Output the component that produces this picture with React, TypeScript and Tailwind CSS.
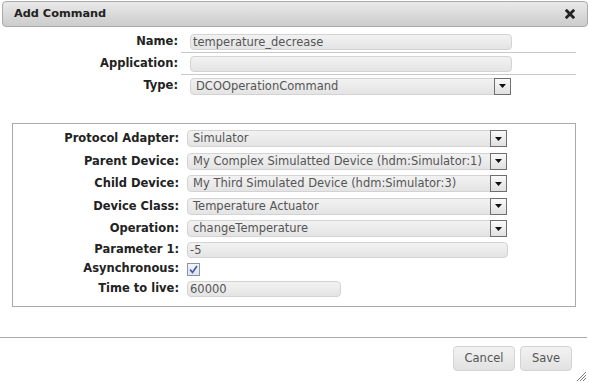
import React from 'react';

const font = { fontFamily: '"DejaVu Sans", Verdana, sans-serif' };

const TextBox = ({ value, w }: { value: string; w: string }) => (
  <div
    className={`${w} h-[16px] rounded-[4px] border border-[#d3d3d3] bg-gradient-to-b from-[#f2f2f2] to-[#e4e4e4] pl-[2px] text-[11.5px] leading-[14px] text-[#555] whitespace-nowrap overflow-hidden`}
  >
    {value}
  </div>
);

const Select = ({ value, w }: { value: string; w: string }) => (
  <div
    className={`${w} h-[17px] flex items-center rounded-[4px] border border-[#d3d3d3] bg-gradient-to-b from-[#f2f2f2] to-[#e4e4e4] text-[11.5px] text-[#555]`}
  >
    <span className="flex-1 pl-[5px] leading-[15px] whitespace-nowrap overflow-hidden">{value}</span>
    <div className="w-[17px] h-[17px] mr-[-1px] border border-[#6f6f6f] bg-gradient-to-b from-[#fafafa] to-[#e0e0e0] flex items-center justify-center">
      <svg width="7" height="4" viewBox="0 0 7 4">
        <path d="M0 0 H7 L3.5 4 Z" fill="#111" />
      </svg>
    </div>
  </div>
);

const Label = ({ children }: { children: React.ReactNode }) => (
  <div className="w-[178px] text-right font-bold text-[11.5px] text-[#222] whitespace-nowrap">{children}</div>
);

const TopRow = ({ label, children, line }: { label: string; children: React.ReactNode; line?: boolean }) => (
  <div className="flex h-[22px] items-center">
    <div className="w-[181px] pr-[3px] flex justify-end">
      <Label>{label}</Label>
    </div>
    <div className={`w-[395px] h-full flex items-center pl-[9px] ${line ? 'border-b border-[#c8c8c8]' : ''}`}>
      {children}
    </div>
  </div>
);

const BoxRow = ({ label, h, children }: { label: string; h: string; children: React.ReactNode }) => (
  <div className={`flex ${h} items-center`}>
    <div className="w-[166px] flex justify-end">
      <Label>{label}</Label>
    </div>
    <div className="pl-[8px] flex items-center">{children}</div>
  </div>
);

export default function App() {
  return (
    <div className="w-[589px] h-[383px] bg-white relative overflow-hidden" style={font}>
      {/* Заголовок */}
      <div className="mx-[2px] mt-[1px] h-[26px] w-[586px] rounded-[4px] border border-[#aaaaaa] bg-gradient-to-b from-[#e9e9e9] to-[#cccccc] flex items-center justify-between px-[11px]">
        <span className="font-bold text-[11.3px] text-[#222]">Add Command</span>
        <svg width="10" height="10" viewBox="0 0 10 10" className="mr-[1px]">
          <path d="M1.8 1.8 L8.2 8.2 M8.2 1.8 L1.8 8.2" stroke="#222" strokeWidth="2.8" strokeLinecap="square" />
        </svg>
      </div>

      {/* Основные поля */}
      <div className="pt-[4px]">
        <TopRow label="Name:" line>
          <TextBox value="temperature_decrease" w="w-[322px]" />
        </TopRow>
        <TopRow label="Application:" line>
          <TextBox value="" w="w-[322px]" />
        </TopRow>
        <TopRow label="Type:">
          <Select value="DCOOperationCommand" w="w-[321px]" />
        </TopRow>
      </div>

      {/* Параметры операции */}
      <div className="ml-[12px] mt-[26px] w-[564px] border border-[#aaaaaa] pt-[3.5px] pb-[6px]">
        <BoxRow label="Protocol Adapter:" h="h-[22.5px]">
          <Select value="Simulator" w="w-[320px]" />
        </BoxRow>
        <BoxRow label="Parent Device:" h="h-[22.5px]">
          <Select value="My Complex Simulatted Device (hdm:Simulator:1)" w="w-[320px]" />
        </BoxRow>
        <BoxRow label="Child Device:" h="h-[22.5px]">
          <Select value="My Third Simulated Device (hdm:Simulator:3)" w="w-[320px]" />
        </BoxRow>
        <BoxRow label="Device Class:" h="h-[22.5px]">
          <Select value="Temperature Actuator" w="w-[320px]" />
        </BoxRow>
        <BoxRow label="Operation:" h="h-[22.5px]">
          <Select value="changeTemperature" w="w-[320px]" />
        </BoxRow>
        <BoxRow label="Parameter 1:" h="h-[20px]">
          <TextBox value="-5" w="w-[321px]" />
        </BoxRow>
        <BoxRow label="Asynchronous:" h="h-[18px]">
          <div className="w-[13px] h-[13px] border border-[#8a96a8] bg-gradient-to-b from-[#f4f6fa] to-[#dde3ec] flex items-center justify-center">
            <svg width="9" height="9" viewBox="0 0 9 9">
              <path d="M1 4.5 L3.5 7.5 L8 1" stroke="#3d57a8" strokeWidth="1.6" fill="none" />
            </svg>
          </div>
        </BoxRow>
        <BoxRow label="Time to live:" h="h-[22px]">
          <TextBox value="60000" w="w-[154px]" />
        </BoxRow>
      </div>

      {/* Кнопки */}
      <div className="mt-[30px] w-[587px] border-t border-[#aaaaaa] flex justify-end gap-[5px] pt-[8px] pr-[15px]">
        <button className="w-[62px] h-[25px] rounded-[4px] border border-[#d3d3d3] bg-gradient-to-b from-[#f2f2f2] to-[#e2e2e2] text-[11.5px] text-[#555]">
          Cancel
        </button>
        <button className="w-[52px] h-[25px] rounded-[4px] border border-[#d3d3d3] bg-gradient-to-b from-[#f2f2f2] to-[#e2e2e2] text-[11.5px] text-[#555]">
          Save
        </button>
      </div>

      {/* Ресайз */}
      <svg width="12" height="12" viewBox="0 0 12 12" className="absolute right-[2px] bottom-[1px]">
        <path d="M11 2 L2 11 M11 5 L5 11 M11 8 L8 11" stroke="#777" strokeWidth="1" />
      </svg>
    </div>
  );
}
